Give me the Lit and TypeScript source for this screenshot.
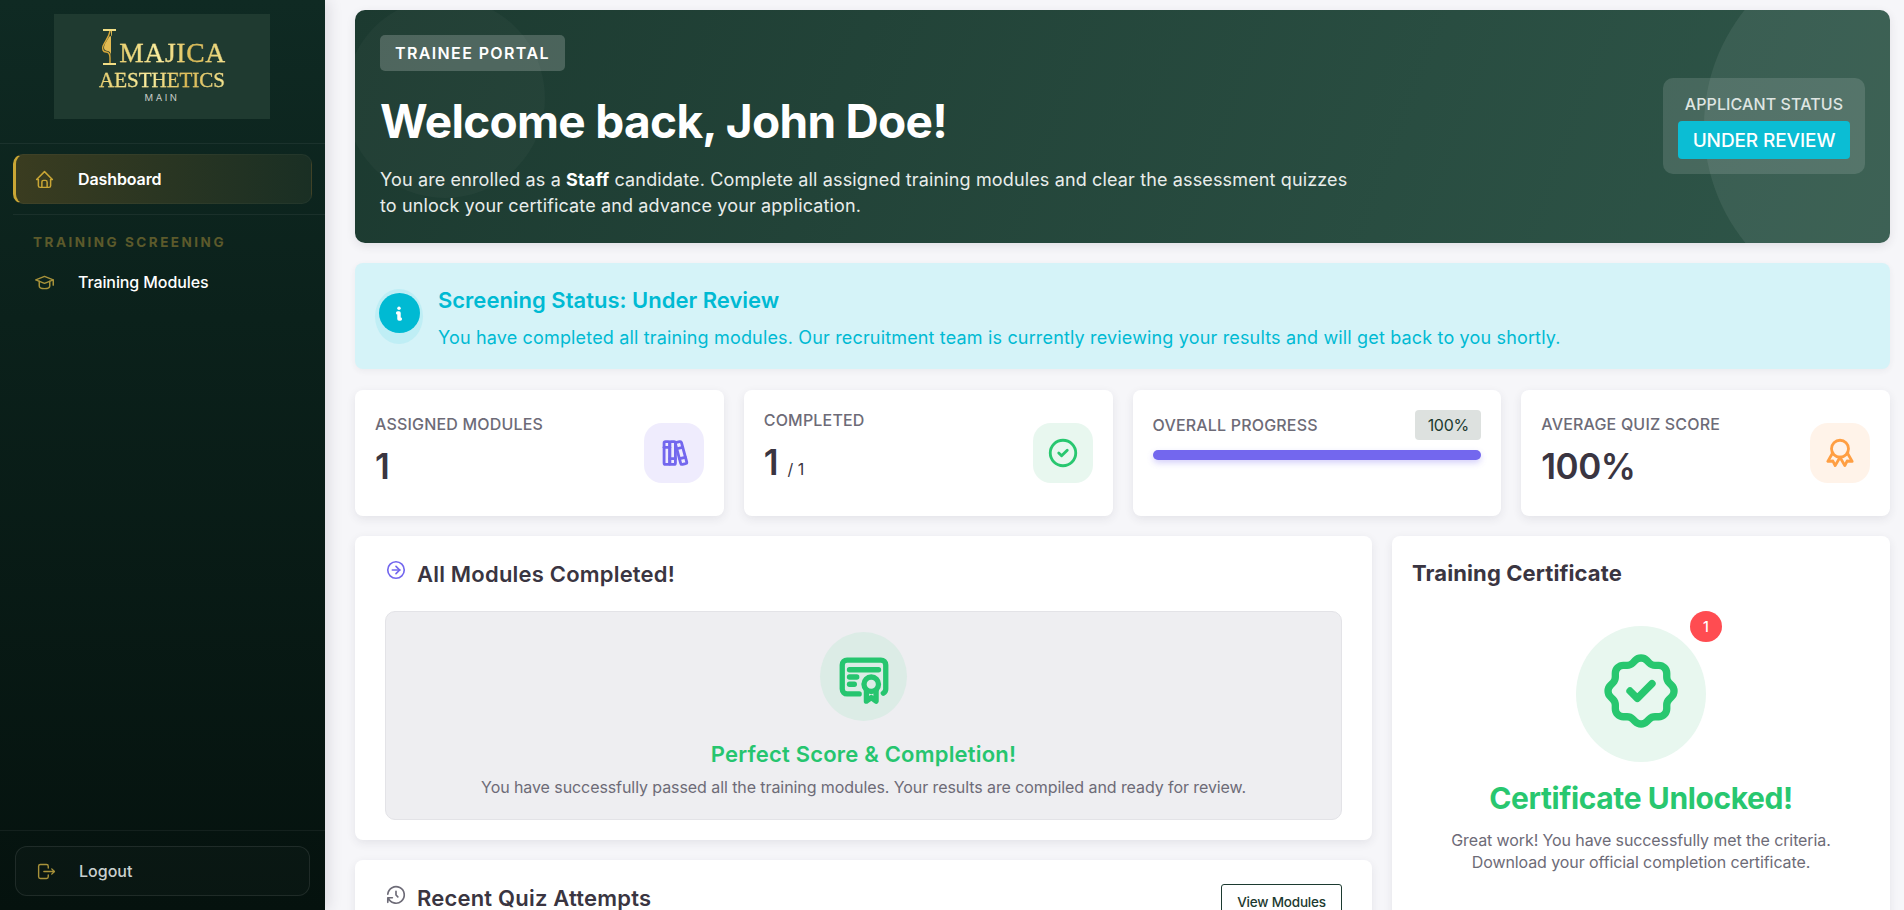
import { LitElement, html, css, svg } from "lit";
import { customElement } from "lit/decorators.js";

const ic = (paths: string[], cls = "") => html`<svg class="ic ${cls}" viewBox="0 0 24 24" fill="none" stroke="currentColor" stroke-width="2" stroke-linecap="round" stroke-linejoin="round">${paths.map((d) => svg`<path d=${d}></path>`)}</svg>`;

const I = {
  home: ["M5 12l-2 0l9 -9l9 9l-2 0", "M5 12v7a2 2 0 0 0 2 2h10a2 2 0 0 0 2 -2v-7", "M9 21v-6a2 2 0 0 1 2 -2h2a2 2 0 0 1 2 2v6"],
  school: ["M22 9l-10 -4l-10 4l10 4l10 -4v6", "M6 10.6v5.4a6 3 0 0 0 12 0v-5.4"],
  logout: ["M14 8v-2a2 2 0 0 0 -2 -2h-7a2 2 0 0 0 -2 2v12a2 2 0 0 0 2 2h7a2 2 0 0 0 2 -2v-2", "M9 12h12l-3 -3", "M18 15l3 -3"],
  books: ["M5 5a1 1 0 0 1 1 -1h2a1 1 0 0 1 1 1v14a1 1 0 0 1 -1 1h-2a1 1 0 0 1 -1 -1z", "M9 5a1 1 0 0 1 1 -1h2a1 1 0 0 1 1 1v14a1 1 0 0 1 -1 1h-2a1 1 0 0 1 -1 -1z", "M5 8h4", "M9 16h4", "M13.803 4.56l2.184 -.53c.562 -.135 1.133 .19 1.282 .732l3.695 13.418a1.02 1.02 0 0 1 -.634 1.219l-.133 .041l-2.184 .53c-.562 .135 -1.133 -.19 -1.282 -.732l-3.695 -13.418a1.02 1.02 0 0 1 .634 -1.219l.133 -.041z", "M14 9l4 -1", "M16 16l3.923 -.98"],
  check: ["M12 3a9 9 0 1 0 0 18a9 9 0 0 0 0 -18", "M9 12l2 2l4 -4"],
  award: ["M6 9a6 6 0 1 0 12 0a6 6 0 1 0 -12 0", "M12 15l3.4 5.89l1.598 -3.233l3.598 .232l-3.4 -5.889", "M6.802 12l-3.4 5.89l3.598 -.233l1.598 3.232l3.4 -5.889"],
  arrow: ["M12 3a9 9 0 1 0 0 18a9 9 0 0 0 0 -18", "M16 12l-4 -4", "M16 12h-8", "M12 16l4 -4"],
  history: ["M12 8l0 4l2 2", "M3.05 11a9 9 0 1 1 .5 4m-.5 5v-5h5"],
  cert: ["M12 15a3 3 0 1 0 6 0a3 3 0 1 0 -6 0", "M13 17.5v4.5l2 -1.5l2 1.5v-4.5", "M10 19h-5a2 2 0 0 1 -2 -2v-10c0 -1.1 .9 -2 2 -2h14a2 2 0 0 1 2 2v10a2 2 0 0 1 -1 1.73", "M6 9l12 0", "M6 12l3 0", "M6 15l2 0"],
  seal: ["M5 7.2a2.2 2.2 0 0 1 2.2 -2.2h1a2.2 2.2 0 0 0 1.55 -.64l.7 -.7a2.2 2.2 0 0 1 3.12 0l.7 .7c.412 .41 .97 .64 1.55 .64h1a2.2 2.2 0 0 1 2.2 2.2v1c0 .58 .23 1.138 .64 1.55l.7 .7a2.2 2.2 0 0 1 0 3.12l-.7 .7a2.2 2.2 0 0 0 -.64 1.55v1a2.2 2.2 0 0 1 -2.2 2.2h-1a2.2 2.2 0 0 0 -1.55 .64l-.7 .7a2.2 2.2 0 0 1 -3.12 0l-.7 -.7a2.2 2.2 0 0 0 -1.55 -.64h-1a2.2 2.2 0 0 1 -2.2 -2.2v-1a2.2 2.2 0 0 0 -.64 -1.55l-.7 -.7a2.2 2.2 0 0 1 0 -3.12l.7 -.7a2.2 2.2 0 0 0 .64 -1.55v-1", "M9 12l2 2l4 -4"],
  info: ["M12 8.5h.01", "M11 12h1v4.5h1"],
};

@customElement("app-root")
export class AppRoot extends LitElement {
  static styles = css`
    :host { display: flex; height: 100vh; overflow: hidden; background: #f6f6f9; font-family: "Inter", "Liberation Sans", sans-serif; color: #2f2b3d; }
    * { box-sizing: border-box; }
    .ic { display: block; flex: none; }
    .side { width: 325px; flex: none; height: 100%; display: flex; flex-direction: column; background: linear-gradient(180deg, #0f2a23 0%, #0b211b 35%, #05120e 100%); box-shadow: 3px 0 14px rgba(47,43,61,.14); z-index: 2; }
    .brand { height: 144px; padding: 14px 1px 0 0; display: flex; justify-content: center; border-bottom: 1px solid rgba(255,255,255,.06); }
    .logo { width: 216px; height: 105px; background: #1f3a30; display: flex; flex-direction: column; align-items: center; padding-top: 16px; }
    .l1 { display: flex; align-items: flex-end; height: 35px; margin-left: 3px; }
    .l1 svg { width: 16px; height: 36px; flex: none; margin-right: 2px; }
    .gold { font-family: "Liberation Serif", serif; background: linear-gradient(90deg, #e9cf6e, #fbf0a4 40%, #d9b44c 70%, #f3e593); -webkit-background-clip: text; background-clip: text; color: transparent; -webkit-text-stroke: .3px rgba(240,220,130,.6); }
    .m { font-size: 27.5px; line-height: 24px; letter-spacing: .7px; }
    .a { font-size: 21px; line-height: 21px; letter-spacing: 0; margin-top: 4.5px; }
    .mn { font-size: 9.5px; letter-spacing: 2.5px; color: #c6cbc6; margin-top: 1px; line-height: 12px; }
    nav { padding: 10px 13px 0; flex: 1; }
    .item { height: 50px; display: flex; align-items: center; padding-left: 21px; gap: 22px; font-size: 16px; font-weight: 600; color: #fff; letter-spacing: -.1px; }
    .item .ic { width: 21px; height: 21px; stroke-width: 1.7; color: #a8923a; margin-right: 1px; }
    .item.on { background: linear-gradient(90deg, #3a3c20, #1a2f24); border: 1px solid rgba(255,255,255,.035); border-left: 3px solid #c9a635; border-radius: 10px; padding-left: 18px; }
    .item.on .ic { color: #c9a635; }
    .sep { height: 1px; background: rgba(255,255,255,.06); margin: 10px -13px 0 0; }
    .cap { font-size: 13.5px; font-weight: 700; letter-spacing: 2.5px; color: #5c5a2b; margin: 20px 0 0 20px; line-height: 14px; }
    .item.plain { margin-top: 12px; height: 42px; font-weight: 500; }
    .foot { border-top: 1px solid rgba(255,255,255,.06); padding: 15px 15px 14px; }
    .out { height: 50px; border: 1px solid rgba(255,255,255,.09); border-radius: 12px; background: rgba(255,255,255,.02); display: flex; align-items: center; padding-left: 20px; gap: 22px; font-size: 16px; font-weight: 500; color: #c9d0cf; }
    .out .ic { width: 21px; height: 21px; stroke-width: 1.6; color: #a8923a; }
    main { flex: 1; min-width: 0; padding: 10px 14px 0 30px; display: flex; flex-direction: column; }
    .hero { height: 233px; flex: none; border-radius: 10px; background: linear-gradient(110deg, #1c3a30, #2f5649); position: relative; overflow: hidden; padding: 25px 25px 0; display: flex; justify-content: space-between; color: #fff; box-shadow: 0 3px 10px rgba(47,43,61,.1); }
    .c1, .c2 { position: absolute; border-radius: 50%; }
    .c1 { width: 200px; height: 200px; left: -10px; top: -12px; background: rgba(255,255,255,.028); }
    .c2 { width: 372px; height: 372px; right: -186px; top: -70px; background: rgba(255,255,255,.07); }
    .htext { position: relative; }
    .tag { display: inline-flex; align-items: center; height: 36px; padding: 0 15px; border-radius: 5px; background: rgba(255,255,255,.2); font-size: 16px; font-weight: 600; letter-spacing: 1.38px; }
    h1 { margin: 22px 0 0; font-size: 46px; line-height: 56px; font-weight: 700; letter-spacing: -.7px; }
    .htext p { margin: 18px 0 0; width: 1100px; font-size: 18px; line-height: 26px; color: #e9edeb; letter-spacing: .14px; }
    .htext b { font-weight: 700; color: #fff; }
    .hs { position: relative; width: 202px; height: 96px; margin: 43px 0 0; background: rgba(255,255,255,.13); border-radius: 10px; display: flex; flex-direction: column; align-items: center; padding-top: 15px; }
    .hs span { font-size: 16px; line-height: 22px; font-weight: 500; color: #dfe5e2; letter-spacing: .1px; white-space: nowrap; }
    .hs strong { margin-top: 6px; width: 172px; height: 38px; background: #0bbdd4; border-radius: 4px; display: flex; align-items: center; justify-content: center; font-size: 19px; font-weight: 500; color: #fff; letter-spacing: -.1px; }
    .alert { margin-top: 20px; height: 106px; flex: none; border-radius: 8px; background: #d5f3f8; color: #00bad3; display: flex; padding: 26px 0 0 20px; box-shadow: 0 2px 6px rgba(47,43,61,.06); }
    .halo { width: 48px; height: 55px; border-radius: 50%; background: #bfeef5; flex: none; display: flex; justify-content: center; padding-top: 4px; margin-top: 0; }
    .dot { width: 41px; height: 40px; border-radius: 50%; background: #00bad3; color: #fff; display: flex; align-items: center; justify-content: center; }
    .dot .ic { width: 32px; height: 32px; stroke-width: 2.6; }
    .atext { margin-left: 15px; }
    .atext h3 { margin: 0; font-size: 22px; line-height: 22px; font-weight: 600; letter-spacing: 0; }
    .atext p { margin: 16px 0 0; font-size: 18px; line-height: 22px; letter-spacing: .16px; }
    .stats { margin-top: 21px; display: grid; grid-template-columns: repeat(4, 1fr); gap: 20px; flex: none; }
    .card { background: #fff; border-radius: 8px; box-shadow: 0 3px 10px rgba(47,43,61,.09); }
    .stat { height: 126px; padding: 0 20px; display: flex; align-items: center; justify-content: space-between; }
    .lab { font-size: 16px; line-height: 20px; font-weight: 500; color: #6d6b77; letter-spacing: .18px; white-space: nowrap; }
    .val { font-size: 35px; line-height: 44px; font-weight: 600; color: #3a3541; margin-top: 10px; letter-spacing: -.5px; }
    .val small { font-size: 16px; font-weight: 400; letter-spacing: 0; margin-left: 1px; }
    .st { padding-bottom: 5px; }
    .sq { width: 60px; height: 60px; border-radius: 18px; display: flex; align-items: center; justify-content: center; flex: none; }
    .sq .ic { width: 34px; height: 34px; }
    .prog { display: block; padding-top: 20px; }
    .pr { display: flex; align-items: center; justify-content: space-between; height: 30px; }
    .chip { width: 66px; height: 30px; background: #dde1df; border-radius: 4px; display: flex; align-items: center; justify-content: center; font-size: 16px; color: #1c3a30; letter-spacing: -.3px; }
    .bar { margin-top: 10px; height: 10px; border-radius: 5px; background: #7367ee; box-shadow: 0 3px 6px rgba(115,103,238,.3); }
    .grid { margin-top: 20px; display: grid; grid-template-columns: 1017px 1fr; gap: 20px; flex: none; align-items: start; }
    .col { display: flex; flex-direction: column; gap: 20px; }
    .panel { padding: 0 30px; }
    .ph { height: 75px; display: flex; align-items: center; position: relative; }
    .ph .ic { width: 22px; height: 22px; color: #7367ee; stroke-width: 1.8; margin: -7px 10px 0 0; }
    h2 { margin: 0; font-size: 22px; font-weight: 600; line-height: 28px; color: #3a3541; letter-spacing: .2px; }
    .done { height: 209px; background: #eeeef1; border: 1px solid #e3e3e7; border-radius: 10px; display: flex; flex-direction: column; align-items: center; padding-top: 20px; margin-bottom: 20px; }
    .ring { width: 87px; height: 89px; border-radius: 50%; background: #dcece6; color: #26c56f; display: flex; align-items: center; justify-content: center; }
    .ring .ic { width: 58px; height: 58px; stroke-width: 2.2; }
    .done h4 { margin: 19px 0 0; font-size: 22px; line-height: 28px; font-weight: 600; color: #26c56f; letter-spacing: .2px; }
    .done p { margin: 7px 0 0; font-size: 16px; line-height: 24px; color: #6d6b77; letter-spacing: -.08px; }
    .recent { height: 120px; }
    .btn { margin: 8px 0 0 auto; height: 36px; width: 121px; border: 1px solid #1c3a30; border-radius: 3px; display: flex; align-items: center; justify-content: center; font-size: 13.5px; font-weight: 500; color: #1c3a30; letter-spacing: -.2px; }
    .ph.r { height: 76px; }
    .ph.r .ic { color: #6d6b77; }
    .cert { height: 500px; padding: 0 20px; display: flex; flex-direction: column; align-items: center; }
    .cert h2 { align-self: flex-start; height: 75px; line-height: 74px; font-weight: 700; letter-spacing: .1px; }
    .bub { position: relative; margin-top: 15px; width: 130px; height: 136px; border-radius: 50%; background: #e8f7ef; color: #28c76f; display: flex; align-items: center; justify-content: center; flex: none; }
    .bub .ic { width: 88px; height: 88px; margin-top: -6px; }
    .n { position: absolute; left: 114px; top: -15px; width: 32px; height: 31px; border-radius: 50%; background: #ff4c51; color: #fff; font-size: 14px; font-weight: 500; display: flex; align-items: center; justify-content: center; }
    .cert h3 { margin: 18px 0 0; font-size: 30px; line-height: 36px; font-weight: 700; color: #28c76f; letter-spacing: -.4px; }
    .cert p { margin: 13px 0 0; text-align: center; font-size: 16px; line-height: 22px; color: #6d6b77; letter-spacing: -.1px; }
  `;

  render() {
    return html`
      <aside class="side">
        <div class="brand">
          <div class="logo">
            <div class="l1">
              <svg viewBox="0 0 16 36" aria-hidden="true">
                <path d="M2 1h13M2 35h13" stroke="#f0dd85" stroke-width="2" fill="none"></path>
                <path d="M9 2C8 8 5 11 2 17c-1 3 0 6 3 6 2 0 4 2 4 6v5" stroke="#d9a93a" stroke-width="1.4" fill="none"></path>
                <path d="M8 8c-2 4-5 7-5 11 0 2 2 3 4 3 3 1 3 4 3 7V2h1c0 8-1 4-3 6z" fill="#e2bb52"></path>
              </svg>
              <span class="gold m">MAJICA</span>
            </div>
            <div class="gold a">AESTHETICS</div>
            <div class="mn">MAIN</div>
          </div>
        </div>
        <nav>
          <div class="item on">${ic(I.home)}<span>Dashboard</span></div>
          <div class="sep"></div>
          <div class="cap">TRAINING SCREENING</div>
          <div class="item plain">${ic(I.school)}<span>Training Modules</span></div>
        </nav>
        <div class="foot"><div class="out">${ic(I.logout)}<span>Logout</span></div></div>
      </aside>
      <main>
        <section class="hero">
          <div class="c1"></div><div class="c2"></div>
          <div class="htext">
            <span class="tag">TRAINEE PORTAL</span>
            <h1>Welcome back, John Doe!</h1>
            <p>You are enrolled as a <b>Staff</b> candidate. Complete all assigned training modules and clear the assessment quizzes<br />to unlock your certificate and advance your application.</p>
          </div>
          <div class="hs"><span>APPLICANT STATUS</span><strong>UNDER REVIEW</strong></div>
        </section>
        <section class="alert">
          <div class="halo"><div class="dot">${ic(I.info)}</div></div>
          <div class="atext">
            <h3>Screening Status: Under Review</h3>
            <p>You have completed all training modules. Our recruitment team is currently reviewing your results and will get back to you shortly.</p>
          </div>
        </section>
        <section class="stats">
          <div class="card stat">
            <div class="st"><div class="lab">ASSIGNED MODULES</div><div class="val">1</div></div>
            <div class="sq" style="background:#efecfd;color:#7367ee">${ic(I.books)}</div>
          </div>
          <div class="card stat">
            <div class="st"><div class="lab">COMPLETED</div><div class="val">1 <small>/ 1</small></div></div>
            <div class="sq" style="background:#e8f7ef;color:#28c76f">${ic(I.check)}</div>
          </div>
          <div class="card stat prog">
            <div class="pr"><div class="lab">OVERALL PROGRESS</div><div class="chip">100%</div></div>
            <div class="bar"></div>
          </div>
          <div class="card stat">
            <div class="st"><div class="lab">AVERAGE QUIZ SCORE</div><div class="val">100%</div></div>
            <div class="sq" style="background:#fff3e9;color:#ff9f43">${ic(I.award)}</div>
          </div>
        </section>
        <section class="grid">
          <div class="col">
            <div class="card panel">
              <div class="ph">${ic(I.arrow)}<h2>All Modules Completed!</h2></div>
              <div class="done">
                <div class="ring">${ic(I.cert)}</div>
                <h4>Perfect Score &amp; Completion!</h4>
                <p>You have successfully passed all the training modules. Your results are compiled and ready for review.</p>
              </div>
            </div>
            <div class="card panel recent">
              <div class="ph r">${ic(I.history)}<h2>Recent Quiz Attempts</h2><div class="btn">View Modules</div></div>
            </div>
          </div>
          <div class="card cert">
            <h2>Training Certificate</h2>
            <div class="bub">${ic(I.seal)}<div class="n">1</div></div>
            <h3>Certificate Unlocked!</h3>
            <p>Great work! You have successfully met the criteria.<br />Download your official completion certificate.</p>
          </div>
        </section>
      </main>
    `;
  }
}
